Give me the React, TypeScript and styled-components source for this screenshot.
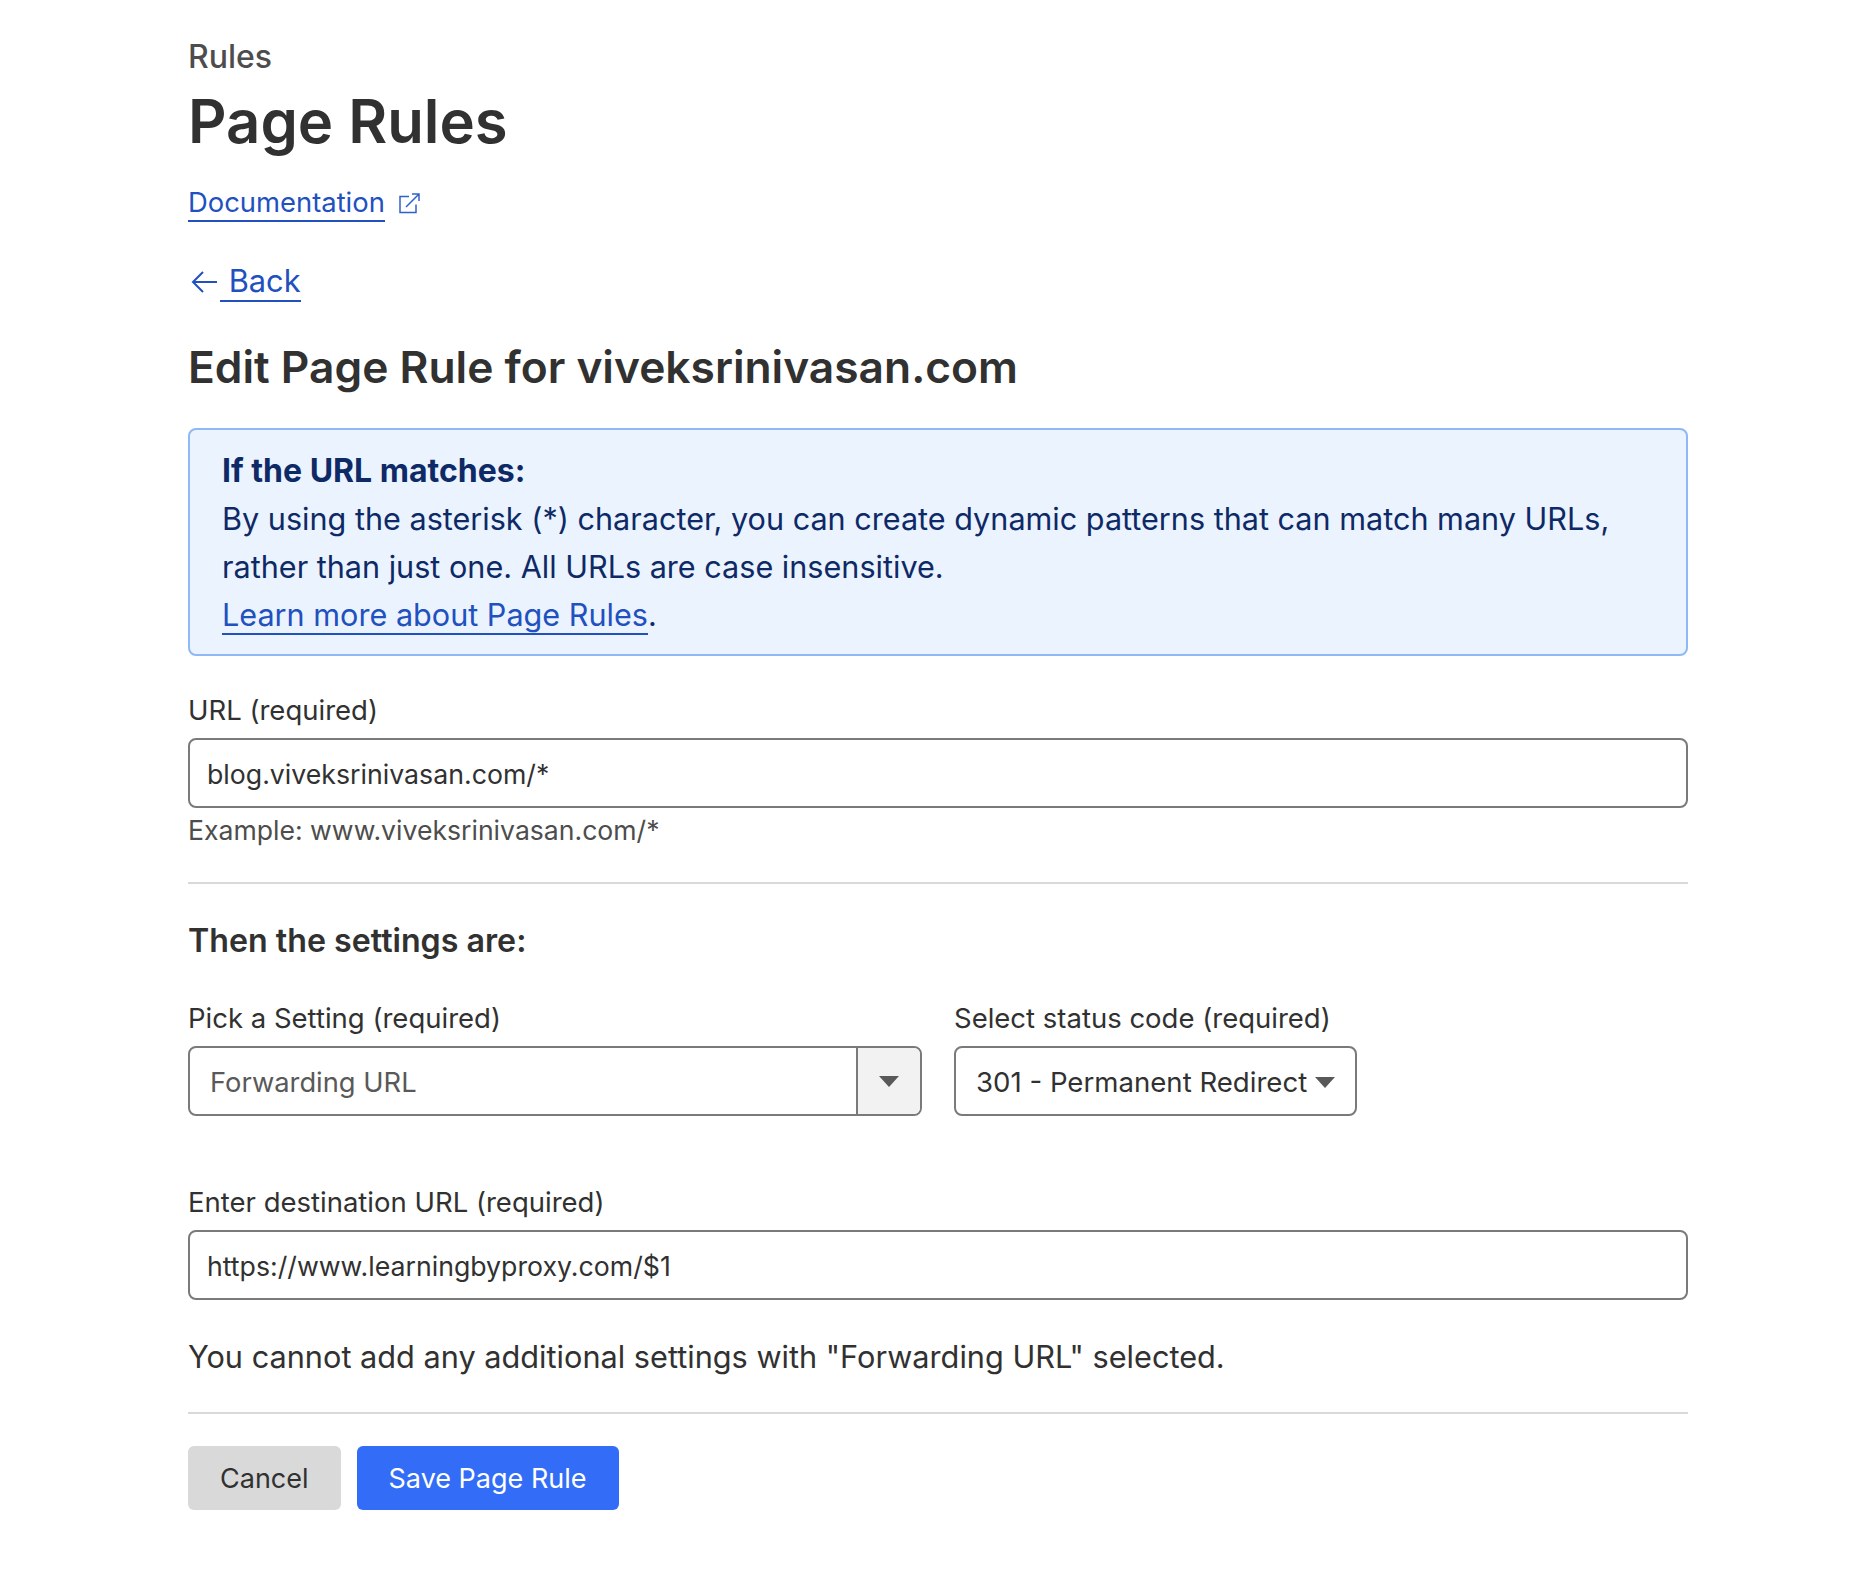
import React from 'react';
import styled, { createGlobalStyle } from 'styled-components';

const GlobalStyle = createGlobalStyle`
  html, body {
    margin: 0;
    padding: 0;
    background: #ffffff;
    font-family: Inter, "Liberation Sans", sans-serif;
    color: #313131;
  }
`;

const Page = styled.main`
  width: 1500px;
  height: 1586px;
  margin-left: 188px;
  padding-top: 38px;
  box-sizing: border-box;
`;

const Eyebrow = styled.div`
  font-size: 32px;
  line-height: 38px;
  font-weight: 500;
  color: #4d4d4d;
`;

const Title = styled.h1`
  margin: 5px 0 0;
  font-size: 59.8px;
  line-height: 80px;
  font-weight: 600;
  color: #313131;
`;

const TextLink = styled.a`
  color: #2150bf;
  text-decoration: none;
  border-bottom: 2px solid #2150bf;
`;

const DocRow = styled.div`
  display: flex;
  align-items: center;
  gap: 14px;
  margin-top: 23px;
  height: 38px;
  font-size: 27.4px;
  line-height: 36px;
`;

const BackRow = styled.div`
  display: flex;
  align-items: center;
  gap: 2px;
  margin-top: 41px;
  height: 38px;
  font-size: 30.8px;
  line-height: 38px;
  color: #2150bf;
`;

const Subtitle = styled.h2`
  margin: 37px 0 0;
  font-size: 44.3px;
  line-height: 58px;
  font-weight: 600;
`;

const Notice = styled.div`
  margin-top: 32px;
  box-sizing: border-box;
  height: 228px;
  padding: 17px 32px 0;
  background: #ebf3fe;
  border: 2px solid #8fb8f6;
  border-radius: 8px;
  font-size: 30.6px;
  line-height: 48px;
  color: #0e2a66;
`;

const NoticeTitle = styled.strong`
  display: block;
  font-size: 32px;
  font-weight: 700;
`;

const Label = styled.label`
  display: block;
  font-size: 27.5px;
  line-height: 36px;
  color: #313131;
`;

const Field = styled.div<{ $top: number }>`
  margin-top: ${p => p.$top}px;

  > ${Label} {
    margin-bottom: 10px;
  }
`;

const Input = styled.div`
  display: flex;
  align-items: center;
  box-sizing: border-box;
  height: 70px;
  padding: 2px 17px 0;
  border: 2px solid #7a7a7a;
  border-radius: 8px;
  font-size: 26.7px;
  color: #313131;
`;

const Hint = styled.div`
  margin-top: 4px;
  font-size: 26.6px;
  line-height: 36px;
  color: #4d4d4d;
`;

const Divider = styled.hr<{ $top?: number }>`
  margin: ${p => p.$top ?? 0}px 0 0;
  border: 0;
  height: 2px;
  background: #d9d9d9;
`;

const SectionTitle = styled.h3`
  margin: 37px 0 0;
  font-size: 32.2px;
  line-height: 40px;
  font-weight: 600;
`;

const SelectRow = styled.div`
  display: flex;
  gap: 32px;
  margin-top: 39px;
`;

const SelectColumn = styled.div<{ $width: number }>`
  width: ${p => p.$width}px;
`;

const ComboBox = styled.div`
  display: flex;
  box-sizing: border-box;
  height: 70px;
  margin-top: 10px;
  border: 2px solid #7a7a7a;
  border-radius: 8px;
  overflow: hidden;
`;

const ComboValue = styled.div`
  flex: 1;
  display: flex;
  align-items: center;
  padding: 2px 0 0 20px;
  font-size: 27.3px;
  color: #595959;
`;

const ComboToggle = styled.div`
  width: 62px;
  display: flex;
  align-items: center;
  justify-content: center;
  background: #f2f2f2;
  border-left: 2px solid #7a7a7a;
`;

const NativeSelect = styled.div`
  display: flex;
  align-items: center;
  justify-content: space-between;
  box-sizing: border-box;
  height: 70px;
  margin-top: 10px;
  padding: 2px 20px 0;
  border: 2px solid #7a7a7a;
  border-radius: 8px;
  font-size: 27.6px;
  color: #313131;
`;

const Caret = styled.span`
  width: 0;
  height: 0;
  border-left: 10.5px solid transparent;
  border-right: 10.5px solid transparent;
  border-top: 11px solid #595959;
`;

const Note = styled.p`
  margin: 37px 0 35px;
  font-size: 30.7px;
  line-height: 40px;
`;

const Actions = styled.div`
  display: flex;
  gap: 16px;
  margin-top: 32px;
`;

const Button = styled.button<{ $primary?: boolean }>`
  height: 64px;
  padding: 0 32px;
  border: 0;
  border-radius: 6px;
  font-family: inherit;
  font-size: 27px;
  background: ${p => (p.$primary ? '#336df7' : '#d9d9d9')};
  color: ${p => (p.$primary ? '#ffffff' : '#313131')};
`;

const ExternalIcon = () => (
  <svg width="21" height="21" viewBox="0 0 21 21" fill="none" stroke="#2f62c9" strokeWidth="1.5">
    <path d="M10 3.5H1v16h16v-8" />
    <path d="M7 14 19.5 1.5M13 1h7v7" />
  </svg>
);

const BackArrow = () => (
  <svg width="28" height="24" viewBox="0 0 28 24" fill="none" stroke="#2150bf" strokeWidth="2" style={{ marginLeft: 2 }}>
    <path d="M27 12H3M13 2 3 12l10 10" />
  </svg>
);

export default function App() {
  return (
    <>
      <GlobalStyle />
      <Page>
        <Eyebrow>Rules</Eyebrow>
        <Title>Page Rules</Title>
        <DocRow>
          <TextLink href="#">Documentation</TextLink>
          <ExternalIcon />
        </DocRow>
        <BackRow>
          <BackArrow />
          <TextLink href="#">&nbsp;Back</TextLink>
        </BackRow>
        <Subtitle>Edit Page Rule for viveksrinivasan.com</Subtitle>
        <Notice>
          <NoticeTitle>If the URL matches:</NoticeTitle>
          By using the asterisk (*) character, you can create dynamic patterns that can match many URLs,
          <br />
          rather than just one. All URLs are case insensitive.
          <br />
          <TextLink href="#">Learn more about Page Rules</TextLink>.
        </Notice>
        <Field $top={36}>
          <Label>URL (required)</Label>
          <Input>blog.viveksrinivasan.com/*</Input>
          <Hint>Example: www.viveksrinivasan.com/*</Hint>
        </Field>
        <Divider $top={34} />
        <SectionTitle>Then the settings are:</SectionTitle>
        <SelectRow>
          <SelectColumn $width={734}>
            <Label>Pick a Setting (required)</Label>
            <ComboBox>
              <ComboValue>Forwarding URL</ComboValue>
              <ComboToggle>
                <Caret />
              </ComboToggle>
            </ComboBox>
          </SelectColumn>
          <SelectColumn $width={403}>
            <Label>Select status code (required)</Label>
            <NativeSelect>
              301 - Permanent Redirect
              <Caret />
            </NativeSelect>
          </SelectColumn>
        </SelectRow>
        <Field $top={68}>
          <Label>Enter destination URL (required)</Label>
          <Input>https://www.learningbyproxy.com/$1</Input>
        </Field>
        <Note>You cannot add any additional settings with "Forwarding URL" selected.</Note>
        <Divider />
        <Actions>
          <Button>Cancel</Button>
          <Button $primary>Save Page Rule</Button>
        </Actions>
      </Page>
    </>
  );
}
